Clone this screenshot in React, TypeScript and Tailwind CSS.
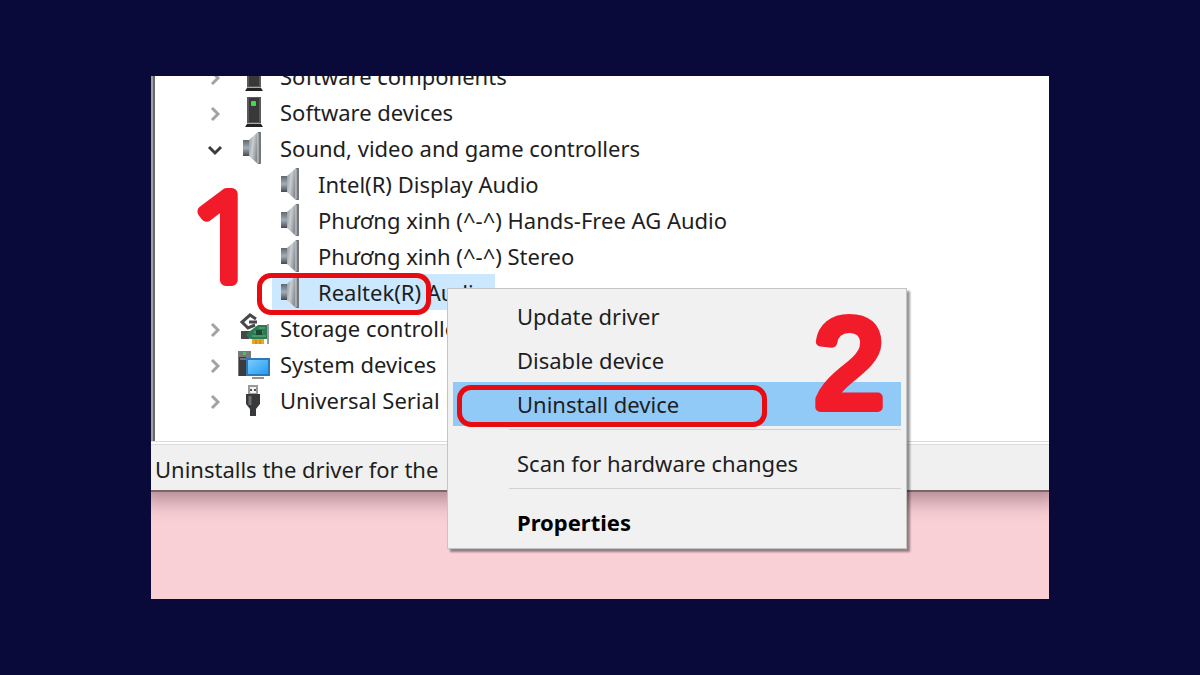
import React from 'react';
import clsx from 'clsx';

type IconName = 'tower' | 'speaker' | 'storage' | 'system' | 'usb';

interface Device {
  label: string;
  icon: IconName;
  child?: boolean;
  open?: boolean;
  selected?: boolean;
}

const devices: Device[] = [
  { label: 'Software components', icon: 'tower' },
  { label: 'Software devices', icon: 'tower' },
  { label: 'Sound, video and game controllers', icon: 'speaker', open: true },
  { label: 'Intel(R) Display Audio', icon: 'speaker', child: true },
  { label: 'Phương xinh (^-^) Hands-Free AG Audio', icon: 'speaker', child: true },
  { label: 'Phương xinh (^-^) Stereo', icon: 'speaker', child: true },
  { label: 'Realtek(R) Audio', icon: 'speaker', child: true, selected: true },
  { label: 'Storage controllers', icon: 'storage' },
  { label: 'System devices', icon: 'system' },
  { label: 'Universal Serial Bus', icon: 'usb' },
];

const TowerIcon = () => (
  <>
    <rect x="9" y="1" width="14" height="26" fill="#5a5a5c" />
    <rect x="11" y="2" width="10" height="24" fill="#38383a" />
    <path d="M9 28h14l2 3H7z" fill="#222" />
    <path d="M9 27.500h14" stroke="#aaa" strokeWidth="1" />
    <rect x="13" y="5" width="5" height="5" rx="1" fill="#3ddc4a" />
  </>
);

const SpeakerIcon = () => (
  <>
    <defs>
      <linearGradient id="cone" x1="0" x2="1" y1="0" y2="0.4">
        <stop offset="0" stopColor="#8d949a" />
        <stop offset="0.5" stopColor="#c9ced2" />
        <stop offset="1" stopColor="#858b90" />
      </linearGradient>
      <linearGradient id="magnet" x1="0" x2="0" y1="0" y2="1">
        <stop offset="0" stopColor="#60676e" />
        <stop offset="0.5" stopColor="#a3adb5" />
        <stop offset="1" stopColor="#454a50" />
      </linearGradient>
    </defs>
    <rect x="5" y="8" width="7" height="16" fill="url(#magnet)" />
    <path d="M11 8 L20 0 V32 L11 24z" fill="url(#cone)" />
    <rect x="20" y="0" width="3" height="32" fill="#73787d" />
    <path d="M20 1v30" stroke="#d5d8da" strokeWidth="1" />
  </>
);

const StorageIcon = () => (
  <>
    <path d="M3 19h11l-3 8H3z" fill="#47484c" />
    <path d="M18 7 L12 3 L4 10 L10 16 L17 13 M19 10H11" fill="none" stroke="#47484b" strokeWidth="3" />
    <path d="M12 19 L20 13 H29 V27 H12 L8 23z" fill="#2c7b50" />
    <path d="M16 20h9M14 24h14M21 16h6" stroke="#65b487" strokeWidth="1" />
    <rect x="18" y="18" width="6" height="5" fill="#174a31" />
    <path d="M30 12v20" stroke="#9a9da0" strokeWidth="2" />
    <path d="M14 27h12v5H14z" fill="#eba51f" />
    <path d="M18 28v4M22 28v4" stroke="#b87a0c" strokeWidth="1" />
  </>
);

const SystemIcon = () => (
  <>
    <defs>
      <linearGradient id="screen" x1="0" x2="1" y1="0" y2="1">
        <stop offset="0" stopColor="#7ccbff" />
        <stop offset="1" stopColor="#239df0" />
      </linearGradient>
    </defs>
    <rect x="0" y="3" width="13" height="25" fill="#77797c" />
    <rect x="1" y="9" width="7" height="19" fill="#3b3c3e" />
    <path d="M2 11h10" stroke="#aaa" strokeWidth="1" />
    <rect x="5" y="4" width="3" height="3" fill="#3ccb4c" />
    <rect x="8" y="10" width="24" height="18" fill="#2e78b5" />
    <rect x="10" y="12" width="20" height="14" fill="url(#screen)" />
    <path d="M14 30h12" stroke="#909499" strokeWidth="2" />
  </>
);

const UsbIcon = () => (
  <>
    <rect x="11" y="2" width="8" height="8" fill="#f1f1f1" stroke="#98999b" strokeWidth="2" />
    <path d="M12 6h2M16 6h2" stroke="#555" strokeWidth="2" />
    <path d="M8 10h14v10l-4 5v7h-6v-7l-4-5z" fill="#38393b" />
    <path d="M12 12v9" stroke="#6c6d70" strokeWidth="3" />
  </>
);

const icons: Record<IconName, React.FC> = {
  tower: TowerIcon,
  speaker: SpeakerIcon,
  storage: StorageIcon,
  system: SystemIcon,
  usb: UsbIcon,
};

const Chevron: React.FC<{ open?: boolean }> = ({ open }) => (
  <svg viewBox="0 0 18 18" className="h-[18px] w-[18px]" fill="none" strokeWidth="3">
    {open ? (
      <path d="M3 6l6 6 6-6" stroke="#3c3c3c" />
    ) : (
      <path d="M6 3l6 6-6 6" stroke="#a3a3a3" />
    )}
  </svg>
);

const DeviceRow: React.FC<{ device: Device }> = ({ device }) => {
  const Icon = icons[device.icon];
  return (
    <li className={clsx('flex h-9 items-center gap-[10px]', device.child ? 'pl-[117px]' : 'pl-[51px]')}>
      {!device.child && (
        <button type="button" className="pt-1" aria-label={`Toggle ${device.label}`}>
          <Chevron open={device.open} />
        </button>
      )}
      <div className={clsx('flex h-9 items-center gap-[10px] pr-2 pl-1', device.selected && 'bg-[#cce8ff]')}>
        <svg viewBox="0 0 32 32" className="h-8 w-8 shrink-0">
          <Icon />
        </svg>
        <span className="pt-px whitespace-nowrap">{device.label}</span>
      </div>
    </li>
  );
};

const MenuItem: React.FC<{ label: string; bold?: boolean; active?: boolean }> = ({ label, bold, active }) => (
  <button
    type="button"
    role="menuitem"
    className={clsx(
      'relative flex h-11 w-full items-center pl-16 whitespace-nowrap',
      active && 'bg-[#91c9f7]',
      bold && 'font-bold text-black'
    )}
  >
    {label}
    {active && <Marker className="top-[3px] left-[4px] h-[42px] w-[310px]" />}
  </button>
);

const Separator = () => <div role="separator" className="mt-[3px] mb-[11px] ml-14 h-px bg-[#d2d2d2]" />;

// red rounded outline around the thing to click
const Marker: React.FC<{ className: string }> = ({ className }) => (
  <span className={clsx('absolute rounded-[14px] border-5 border-[#e80c12]', className)} />
);

const StepNumber: React.FC<{ value: number; stroke: number; className: string }> = ({ value, stroke, className }) => (
  <svg viewBox="0 0 80 110" className={clsx('absolute h-[110px] w-20 overflow-visible', className)}>
    <text
      x="40"
      y="98"
      textAnchor="middle"
      fill="#f21b2a"
      stroke="#f21b2a"
      strokeWidth={stroke}
      strokeLinejoin="round"
    >
      {value}
    </text>
  </svg>
);

const ContextMenu = () => (
  <div
    role="menu"
    className="absolute top-[212px] left-[296px] w-[460px] border border-[#c4c4c4] bg-[#f1f1f1] px-[5px] pt-[5px] pb-1 shadow-[3px_3px_2px_rgba(0,0,0,0.4)]"
  >
    <MenuItem label="Update driver" />
    <MenuItem label="Disable device" />
    <MenuItem label="Uninstall device" active />
    <Separator />
    <MenuItem label="Scan for hardware changes" />
    <Separator />
    <MenuItem label="Properties" bold />
  </div>
);

const App: React.FC = () => {
  return (
    <div className="flex min-h-screen items-center bg-[#0a0a3a] px-[151px] font-['Noto_Sans','Open_Sans',sans-serif] text-[22px] text-[#1e1e1e]">
      <main className="relative w-full overflow-hidden bg-[#fad0d7] pb-[107px]">
        <div className="border-b-2 border-[#77676a] shadow-[0_-4px_20px_12px_rgba(60,20,30,0.4)]">
          <div className="border-l-2 border-[#a0a0a0] bg-white">
            <ul className="-mt-[18px] border-l-2 border-[#696969] pb-[23px]">
              {devices.map((device) => (
                <DeviceRow key={device.label} device={device} />
              ))}
            </ul>
          </div>
          <div className="border-t border-[#dcdcdc] bg-white pt-0.5">
            <p className="flex h-[46px] items-center border-t border-[#dcdcdc] bg-[#f0f0f0] pt-1 pl-1 whitespace-nowrap">
              Uninstalls the driver for the
            </p>
          </div>
        </div>
        <Marker className="top-[197px] left-[106px] h-[42px] w-[174px]" />
        <StepNumber
          value={1}
          stroke={12}
          className="top-[106px] left-[35px] font-['Open_Sans',sans-serif] text-[120px] font-light"
        />
        <ContextMenu />
        <StepNumber
          value={2}
          stroke={10}
          className="top-[233px] left-[658px] font-['Liberation_Sans',sans-serif] text-[126px]"
        />
      </main>
    </div>
  );
};

export default App;
